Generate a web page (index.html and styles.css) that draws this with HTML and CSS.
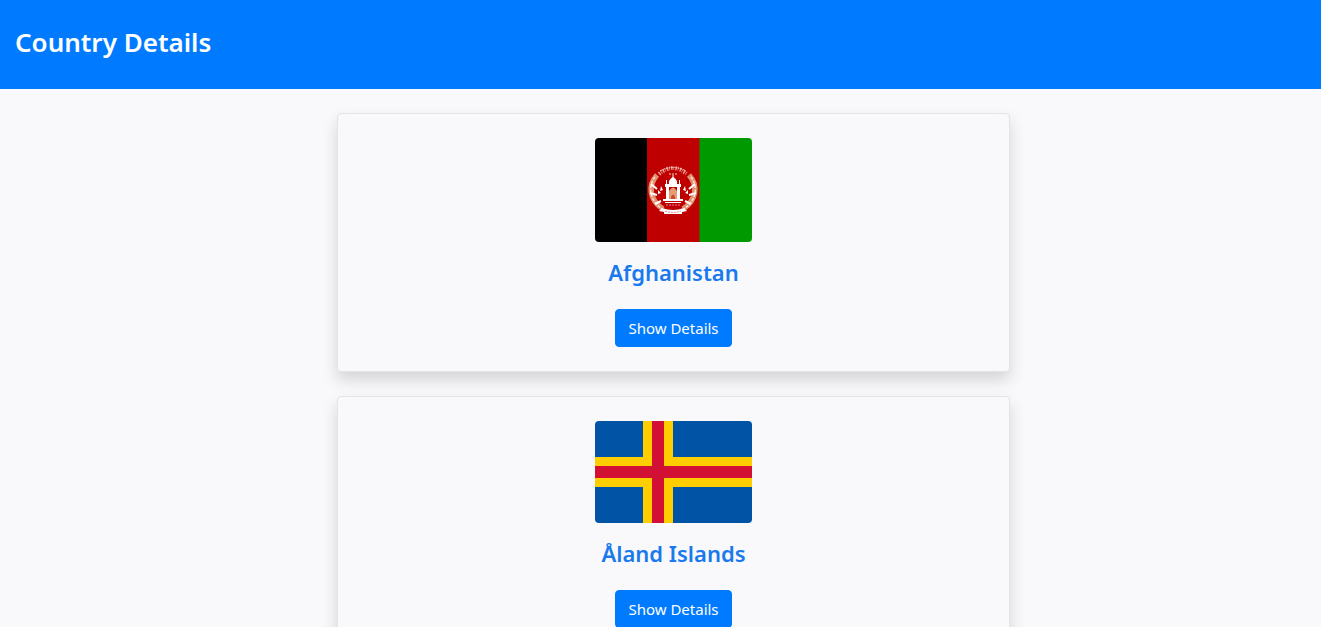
FILE: index.html
```html
<!DOCTYPE html>
<html lang="en">
<head>
<meta charset="utf-8">
<meta name="viewport" content="width=device-width, initial-scale=1">
<title>Country Details</title>
<link rel="stylesheet" href="styles.css">
</head>
<body>
<header class="header"><h1 class="header-title">Country Details</h1></header>
<main class="countries">
  <article class="card">
    <svg class="flag" viewBox="0 0 157 104" role="img" aria-label="Flag of Afghanistan">
      <rect width="53" height="104" fill="#000"/>
      <rect x="52" width="53" height="104" fill="#bf0000"/>
      <rect x="104.500" width="53" height="104" fill="#009900"/>
      <g fill="none" stroke="#f3d3c4">
        <path d="M62 37C53 47 54 62 68 71" stroke="#e19070" stroke-width="5.500"/>
        <path d="M94 37C103 47 102 62 88 71" stroke="#e19070" stroke-width="5.500"/>
        <path d="M60 39C53 48 54 62 67 71M96 39C103 48 102 62 89 71" stroke="#fbe5da" stroke-width="1.500" stroke-dasharray="3 1.500"/>
        <path d="M56 46l6 5M55 55l7 2M60 66l6-3M100 46l-6 5M101 55l-7 2M96 66l-6-3" stroke="#fff" stroke-width="2"/>
        <path d="M64 36Q78 24 92 36" stroke-width="4" stroke-dasharray="1.500 1 .7 1.300" stroke="#ec9c91"/>
        <path d="M65 33Q78 26 91 33M74 36h8" stroke-dasharray="2 1"/>
      </g>
      <g fill="#fff">
        <path d="M74 46Q73 42 78 39Q83 42 82 46Z"/>
        <path d="M70 46h16v3H70zM71 49h3v14h-3zM82 49h3v14h-3zM68 61h20v2H68zM70 64h16v1H70z"/>
        <path d="M71 42h1v4h-1zM84 42h1v4h-1zM77.500 37h1v3h-1z"/>
        <path d="M66 48l2 4-3 1zM63 52l3 3-3 1zM90 48l-2 4 3 1zM93 52l-3 3 3 1z"/>
        <path d="M67 70Q78 74 89 70l3 3-5 1v2H69v-2l-5-1z"/>
      </g>
      <path d="M74 61V53Q78 46 82 53V61Z" fill="#e79b70"/>
      <path d="M76 59q2-5 4 0v2h-4z" fill="#c94830"/>
      <path d="M71 67h14M70 73q8 3 16 0" fill="none" stroke="#e68780" stroke-dasharray="2 1"/>
    </svg>
    <h2 class="card-title">Afghanistan</h2>
    <button class="btn" type="button">Show Details</button>
  </article>
  <article class="card">
    <svg class="flag" viewBox="0 0 157 102" role="img" aria-label="Flag of the Åland Islands">
      <rect width="157" height="102" fill="#0053a5"/>
      <path d="M48 0h30v102H48zM0 36h157v30H0z" fill="#ffce00"/>
      <path d="M57 0h12v102H57zM0 45h157v12H0z" fill="#d21034"/>
    </svg>
    <h2 class="card-title">Åland Islands</h2>
    <button class="btn" type="button">Show Details</button>
  </article>
</main>
</body>
</html>
```
FILE: styles.css
```css
* { box-sizing: border-box; }
body {
  margin: 0;
  background: #f9f9fc;
  font-family: "Segoe UI", "Noto Sans", sans-serif;
  font-size: 16px;
  line-height: 24px;
}
.header {
  padding: 25px 15px 30px;
  background: #007bff;
  color: #fff;
}
.header-title {
  margin: 0;
  font-size: 26px;
  font-weight: 600;
  line-height: 34px;
}
.countries {
  display: flex;
  flex-direction: column;
  align-items: center;
  gap: 24px;
  padding: 24px 0 24px 26px;
}
.card {
  display: flex;
  flex-direction: column;
  align-items: center;
  width: 52%;
  padding: 24px;
  border: 1px solid #e3e4e7;
  border-radius: 4px;
  background: #f9f9fc;
  box-shadow: 0 8px 16px rgba(0, 0, 0, 0.15);
}
.flag {
  display: block;
  width: 157px;
  border-radius: 4px;
}
.card-title {
  margin: 16px 0 23px;
  color: #1a7aed;
  font-size: 22px;
  font-weight: 600;
  line-height: 28px;
}
.btn {
  padding: 6px 12px;
  border: 1px solid #007bff;
  border-radius: 4px;
  background: #007bff;
  color: #fff;
  font: inherit;
  font-size: 15px;
  cursor: pointer;
}
```
